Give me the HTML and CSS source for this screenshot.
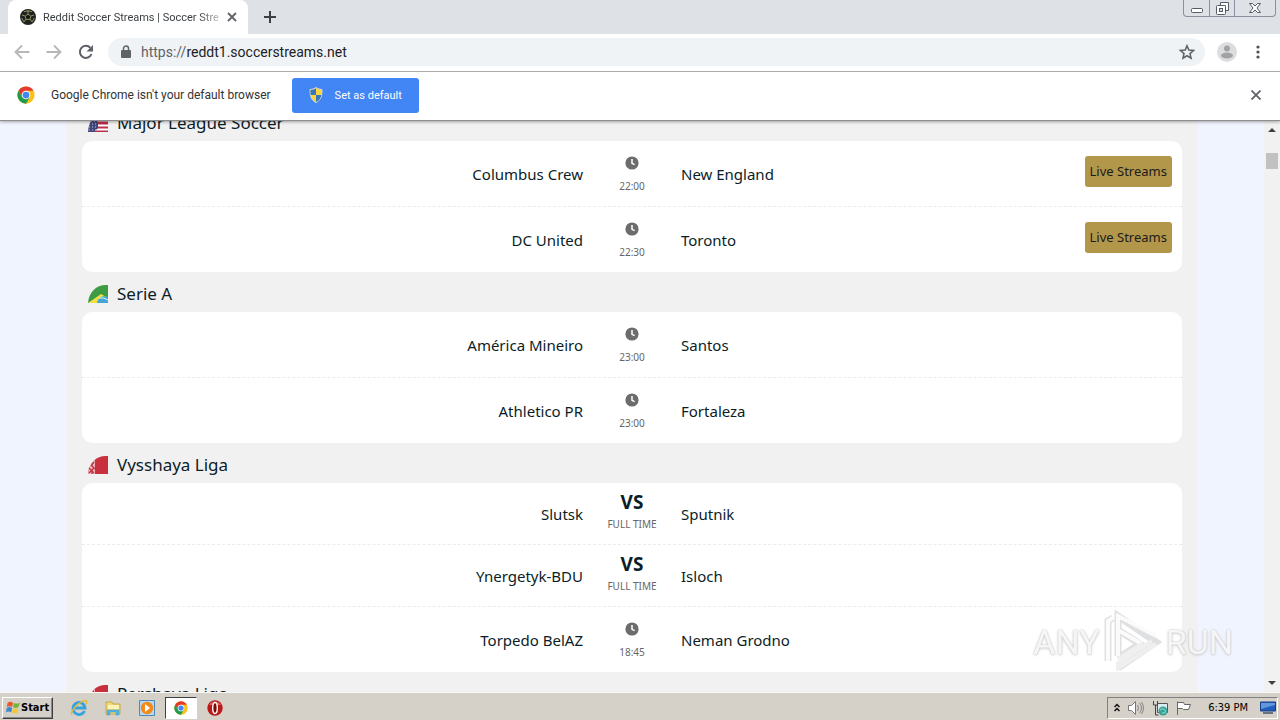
FILE: index.html
```html
<!DOCTYPE html>
<html lang="en">
<head>
<meta charset="utf-8">
<title>Reddit Soccer Streams</title>
<link rel="stylesheet" href="styles.css">
</head>
<body>
<svg class="defs" aria-hidden="true">
  <symbol id="clock" viewBox="0 0 14 14"><circle cx="7" cy="7" r="6.6" fill="#6c6c6c"/><path d="M7 3v4.3l2.6 1.4" fill="none" stroke="#fff" stroke-width="1.5"/></symbol>
  <symbol id="belarus" viewBox="0 0 20 18"><path d="M0 18C1 7 8 0 18 0h2v18z" fill="#c8303e"/><path d="M0 18C1 11 3 7 7 4v14z" fill="#e9b9bd"/><path d="M1 17l5-5M1 12l5 5M3 9l4 4M6 6l-3 4M4 14v4" stroke="#c8303e" stroke-width="1.3"/></symbol>
  <symbol id="chrome" viewBox="0 0 48 48"><circle cx="24" cy="24" r="23" fill="#fbc116"/><path d="M4.1 12.5A23 23 0 0 1 43.9 12.5H24L14 30z" fill="#e33b2e"/><path d="M4.1 12.5 14 30l10 5 10-5-10 17A23 23 0 0 1 4.1 12.5z" fill="#229a4c"/><circle cx="24" cy="24" r="11.5" fill="#fff"/><circle cx="24" cy="24" r="9" fill="#4285f4"/></symbol>
</svg>
<div class="screen">
  <header class="tabstrip">
    <div class="tab">
      <svg class="i16" viewBox="0 0 16 16"><circle cx="8" cy="8" r="8" fill="#20241e"/><path d="m8 5.2 2.8 2-1 3.2H6.2l-1-3.2z" fill="#121512" stroke="#8d9165"/><path d="M8 1v4M2 6l3 1M14 6l-3 1M4 13l2-3M12 13l-2-3M4 2.5 8 2l4 .5M1.5 9 4 13M14.5 9 12 13" stroke="#8d9165" fill="none"/></svg>
      <span class="tab-title">Reddit Soccer Streams | Soccer Stre</span>
      <button class="plain" aria-label="Close tab"><svg class="i10" viewBox="0 0 10 10"><path d="m1 1 8 8M9 1 1 9" stroke="#5f6368" stroke-width="1.8"/></svg></button>
    </div>
    <button class="plain newtab" aria-label="New tab"><svg class="i12" viewBox="0 0 12 12"><path d="M6 0v12M0 6h12" stroke="#3c4043" stroke-width="2"/></svg></button>
    <div class="winbtns">
      <button aria-label="Minimize"><svg width="12" height="12" viewBox="0 0 12 12"><rect x=".5" y="6.5" width="11" height="4" rx="1" fill="#fff" stroke="#555b66"/></svg></button>
      <button aria-label="Restore"><svg width="13" height="13" viewBox="0 0 13 13"><path d="M4.5.5h8v8h-3v-5h-5z" fill="#fff" stroke="#555b66"/><rect x=".5" y="3.5" width="9" height="9" rx="1" fill="#fff" stroke="#555b66"/><rect x="3.5" y="6.5" width="3" height="3" fill="#dee1e6" stroke="#555b66"/></svg></button>
      <button class="wide" aria-label="Close"><svg width="12" height="12" viewBox="0 0 12 12"><path d="M.5 1.5h3L6 4l2.5-2.5h3L8 6l3.5 4.5h-3L6 8l-2.5 2.5h-3L4 6z" fill="#fff" stroke="#555b66"/></svg></button>
    </div>
  </header>

  <div class="toolbar">
    <button class="plain" aria-label="Back"><svg class="i16" viewBox="0 0 16 16"><path d="M15.5 8H2M8 1.5 1.5 8 8 14.5" fill="none" stroke="#b5b7b9" stroke-width="1.8"/></svg></button>
    <button class="plain" aria-label="Forward"><svg class="i16" viewBox="0 0 16 16"><path d="M.5 8H14M8 1.5 14.5 8 8 14.5" fill="none" stroke="#b5b7b9" stroke-width="1.8"/></svg></button>
    <button class="plain" aria-label="Reload"><svg class="i16" viewBox="0 0 16 16"><path d="M13.5 10A6 6 0 1 1 12.3 3.8" fill="none" stroke="#5f6368" stroke-width="2"/><path d="M15 1v6.5H8.5z" fill="#5f6368"/></svg></button>
    <div class="omnibox">
      <svg width="10" height="14" viewBox="0 0 10 14"><rect y="5" width="10" height="8" rx="1" fill="#5f6368"/><path d="M2.500 6V3.500a2.500 2.500 0 0 1 5 0V6" fill="none" stroke="#5f6368" stroke-width="1.500"/></svg>
      <a class="url" href="#"><span class="scheme">https://</span>reddt1.soccerstreams.net</a>
      <button class="plain" aria-label="Bookmark"><svg class="i16" viewBox="0 0 16 16"><path d="m8 1.800 1.800 4.300 4.700.4-3.500 3.100 1 4.600L8 11.800l-4 2.400 1-4.600-3.500-3.100 4.700-.4z" fill="none" stroke="#5f6368" stroke-width="1.600"/></svg></button>
    </div>
    <button class="plain" aria-label="Profile"><svg width="20" height="20" viewBox="0 0 20 20"><circle cx="10" cy="10" r="10" fill="#dcdddf"/><circle cx="10" cy="6.500" r="3" fill="#a0a2a5"/><ellipse cx="10" cy="13.500" rx="6" ry="3" fill="#a0a2a5"/></svg></button>
    <button class="plain menu" aria-label="Menu"><svg width="4" height="14" viewBox="0 0 4 14"><g fill="#4d5156"><circle cx="2" cy="2" r="1.600"/><circle cx="2" cy="7" r="1.600"/><circle cx="2" cy="12" r="1.600"/></g></svg></button>
  </div>

  <div class="infobar">
    <svg class="i18"><use href="#chrome"/></svg>
    <span class="info-text">Google Chrome isn't your default browser</span>
    <button class="set-default"><svg width="14" height="16" viewBox="0 0 14 16"><path d="M7 .5C5 2 3 2.300 1 2.500 1 9 2 13 7 15.500 12 13 13 9 13 2.500 11 2.300 9 2 7 .5z" fill="#f8d43d" stroke="#d5dae2"/><path d="M7 1.500V8H1.700C1.400 6 1.500 4.500 1.500 3 4 2.800 5.500 2.400 7 1.500zM7 8h5.300c-.5 3.500-2 5.500-5.300 7z" fill="#3777bd"/></svg>Set as default</button>
    <button class="plain dismiss" aria-label="Dismiss"><svg class="i10" viewBox="0 0 10 10"><path d="m.5.500 9 9M9.500.500l-9 9" stroke="#5f6368" stroke-width="1.800"/></svg></button>
  </div>

  <div class="viewport">
    <main class="page">
      <div class="scrolled">
      <h2><svg class="flag" viewBox="0 0 20 18"><path d="M0 18C1 7 8 0 18 0h2v18z" fill="#b9304a"/><path d="M9 6.500h11M9 11.500h11M0 15.500h20" stroke="#fff" stroke-width="2"/><path d="M0 18C1 7 5 2 10 1v13l-4 4z" fill="#3f477f"/><path d="M1 10h9M1 13h9M3 7h7M1 16h7" stroke="#c4c6da" stroke-dasharray="1 2"/></svg>Major League Soccer</h2>
      <section class="card">
        <div class="match"><span class="home">Columbus Crew</span><div class="status timed"><svg><use href="#clock"/></svg><small>22:00</small></div><div class="away">New England<button class="live">Live Streams</button></div></div>
        <div class="match"><span class="home">DC United</span><div class="status timed"><svg><use href="#clock"/></svg><small>22:30</small></div><div class="away">Toronto<button class="live">Live Streams</button></div></div>
      </section>
      <h2><svg class="flag" viewBox="0 0 20 18"><path d="M0 18C1 7 8 0 18 0h2v18z" fill="#3c9b43"/><path d="m0 18 13-9 7 4v5z" fill="#f2df45"/><path d="M9 18c1-5 5-8 11-6v6z" fill="#42a6d4"/><path d="M11 13q5-1 9 2" fill="none" stroke="#e6f3f6"/></svg>Serie A</h2>
      <section class="card">
        <div class="match"><span class="home">América Mineiro</span><div class="status timed"><svg><use href="#clock"/></svg><small>23:00</small></div><div class="away">Santos</div></div>
        <div class="match"><span class="home">Athletico PR</span><div class="status timed"><svg><use href="#clock"/></svg><small>23:00</small></div><div class="away">Fortaleza</div></div>
      </section>
      <h2><svg class="flag"><use href="#belarus"/></svg>Vysshaya Liga</h2>
      <section class="card">
        <div class="match"><span class="home">Slutsk</span><div class="status"><b>VS</b><small>FULL TIME</small></div><div class="away">Sputnik</div></div>
        <div class="match"><span class="home">Ynergetyk-BDU</span><div class="status"><b>VS</b><small>FULL TIME</small></div><div class="away">Isloch</div></div>
        <div class="match"><span class="home">Torpedo BelAZ</span><div class="status timed"><svg><use href="#clock"/></svg><small>18:45</small></div><div class="away">Neman Grodno</div></div>
      </section>
      <h2><svg class="flag"><use href="#belarus"/></svg>Pershaya Liga</h2>
      </div>
    </main>
    <div class="scrollbar">
      <svg width="8" height="4" viewBox="0 0 8 4"><path d="M0 4 4 0l4 4z" fill="#404040"/></svg>
      <div class="thumb"></div>
      <svg width="8" height="4" viewBox="0 0 8 4"><path d="M0 0h8L4 4z" fill="#404040"/></svg>
    </div>
    <div class="watermark"><span>ANY</span><svg width="58" height="64" viewBox="0 0 58 64"><g fill="none" stroke="#dcdddf" stroke-width="7"><path d="M4 51V11l5-3M14 46V6l38 26-38 26"/><path d="M14 20l22 14-22 14"/></g><g fill="none" stroke="#fbfbfb" stroke-width="4"><path d="M4 51V11l5-3M14 46V6l38 20"/><path d="M14 20l24 14"/></g><g fill="none" stroke="#eeeeef" stroke-width="4"><path d="M52 34 14 58v-5l34-22M38 34 14 49"/></g></svg><span>RUN</span></div>
  </div>

  <footer class="taskbar">
    <button class="start"><svg width="16" height="16" viewBox="0 0 18 16"><path d="M3 2q3-2 6 0L8 7Q5 5 2 7z" fill="#e8592b"/><path d="M10 2q3 2 7 0l-2 5q-3 2-6 0z" fill="#74b53a"/><path d="M2 8q3-2 6 0l-1 5q-3-2-6 0z" fill="#3e87cf"/><path d="M9 8q3 2 6 0l-1 5q-3 2-6 0z" fill="#f7c82e"/></svg>Start</button>
    <nav class="apps">
      <button aria-label="Internet Explorer"><svg class="i18" viewBox="0 0 18 18"><path d="M14.500 12A6 6 0 1 1 15 9H5" fill="none" stroke="#35a3dd" stroke-width="2.800"/><path d="M2 16C-1 14 8 3 15 1.500q3 0 1 4" fill="none" stroke="#e5b93a" stroke-width="1.400"/></svg></button>
      <button aria-label="Explorer"><svg class="i18" viewBox="0 0 18 18"><path d="M2 3h6l1 2h7v10H2z" fill="#eed777" stroke="#c9aa46"/><path d="M4 6h11v4H4z" fill="#fbf2b8"/><path d="M3 16v-5h12v5h-3v-3H6v3z" fill="#55b4e0" stroke="#4298c4" stroke-width=".5"/></svg></button>
      <button aria-label="Media Player"><svg class="i18" viewBox="0 0 18 18"><path d="M1.500 1.500h15v15h-15z" fill="#b9d7ee" stroke="#4b89bd"/><circle cx="9" cy="9" r="6.200" fill="#f18a1b"/><path d="m7 5 5 4-5 4z" fill="#fff"/></svg></button>
      <button class="active" aria-label="Chrome"><svg class="i14"><use href="#chrome"/></svg></button>
      <button aria-label="Opera"><svg class="i18" viewBox="0 0 18 18"><circle cx="9" cy="9" r="7.700" fill="#bd1717"/><path d="M3 6a7 7 0 0 1 12 0z" fill="#db6158"/><ellipse cx="9" cy="9" rx="2.300" ry="5.500" fill="#7b0909" stroke="#fff" stroke-width="1.400"/></svg></button>
    </nav>
    <div class="tray">
      <svg width="6" height="9" viewBox="0 0 6 9"><path d="m.5 4 2.500-2.500L5.500 4M.5 8 3 5.500 5.500 8" fill="none" stroke="#111" stroke-width="1.500"/></svg>
      <svg width="16" height="16" viewBox="0 0 16 16"><path d="M.5 5.500h3l4-4v13l-4-4h-3z" fill="#fff" stroke="#777"/><path d="M9.500 5q2 3 0 6M11.500 3q4 5 0 10M13.500 2q4 6 0 12" fill="none" stroke="#858585"/></svg>
      <svg width="16" height="16" viewBox="0 0 16 16"><path d="M5.500 3.500h10v9h-10z" fill="#d9eef0" stroke="#555"/><path d="M1.500 1v4h4V1M3.500 5v10h3" fill="none" stroke="#444"/><circle cx="11" cy="11" r="4.500" fill="#36a49b"/><path d="M8 10q3-3 5 0t-3 3" fill="none" stroke="#9fd8ce"/></svg>
      <svg width="16" height="16" viewBox="0 0 16 16"><path d="M1.500 15V1.500M1.500 2.500h6l1 2h6l-2 5h-5l-1-1h-5" fill="#fff" stroke="#666"/></svg>
      <time>6:39 PM</time>
      <svg width="16" height="14" viewBox="0 0 16 14"><path d="M.5 1h15v9H.500z" fill="#225dbb" stroke="#173f85"/><path d="M1 2h14v2L1 8z" fill="#6297df"/><path d="M3 12h10" stroke="#68737f" stroke-width="2"/></svg>
    </div>
  </footer>
</div>
</body>
</html>
```
FILE: styles.css
```css
* { box-sizing: border-box; }
body { margin: 0; font-family: Roboto, "Open Sans", sans-serif; color: #0b1d27; }
button { font: inherit; color: inherit; margin: 0; padding: 0; border: 0; background: none; display: flex; align-items: center; justify-content: center; }
svg { display: block; flex: none; }
a { color: inherit; text-decoration: none; }
.defs { position: absolute; width: 0; height: 0; }
.i10 { width: 10px; height: 10px; }
.i12 { width: 12px; height: 12px; }
.i14 { width: 14px; height: 14px; }
.i16 { width: 16px; height: 16px; }
.i18 { width: 18px; height: 18px; }
.screen { height: 100vh; display: flex; flex-direction: column; overflow: hidden; }

.tabstrip { display: flex; height: 34px; background: #dee1e6; padding-left: 8px; flex: none; }
.tab { display: flex; align-items: center; width: 240px; background: #fff; border-radius: 8px 8px 0 0; padding: 0 11px 0 12px; gap: 7px; }
.tab-title { flex: 1; min-width: 0; overflow: hidden; white-space: nowrap; font-size: 11px; color: #3c4043; -webkit-mask-image: linear-gradient(to right, #000 88%, #0004); mask-image: linear-gradient(to right, #000 88%, #0004); }
.newtab { width: 44px; }
.winbtns { display: flex; margin-left: auto; margin-right: 4px; height: 17px; border: 1px solid #8b919c; border-top: 0; border-radius: 0 0 4px 4px; }
.winbtns button { width: 25px; }
.winbtns button + button { border-left: 1px solid #8b919c; }
.winbtns .wide { width: 41px; }

.toolbar { display: flex; align-items: center; height: 38px; flex: none; padding: 0 17px 2px 14px; gap: 16px; background: #fff; border-bottom: 1px solid #b6b6b8; }
.omnibox { flex: 1; display: flex; align-items: center; gap: 10px; height: 28px; margin: 0 -4px 0 -2px; padding: 0 10px 0 13px; border-radius: 14px; background: #f0f3f6; }
.url { flex: 1; font-size: 14px; color: #202124; }
.scheme { color: #5f6368; }
.menu { width: 10px; }

.infobar { display: flex; align-items: center; height: 49px; flex: none; padding: 0 19px 2px 17px; background: #fff; border-bottom: 1px solid #8e8e8e; box-shadow: 0 1px 3px #0005; position: relative; z-index: 1; }
.info-text { margin: 0 21px 0 16px; font-size: 12px; color: #333; }
.set-default { height: 35px; padding: 0 17px; gap: 12px; border-radius: 3px; background: #4285f4; color: #fff; font-size: 11px; }
.dismiss { margin-left: auto; }

.viewport { position: relative; flex: 1; min-height: 0; display: flex; background: #f0f4fe; overflow: hidden; }
.page { flex: 1; margin: 0 66px; padding: 0 16px; background: #f1f1f1; overflow: hidden; font-family: "Noto Sans", "Open Sans", sans-serif; }
.scrolled { margin-top: -20px; }
h2 { display: flex; align-items: center; height: 40px; margin: 0; padding: 3px 6px 0; gap: 9px; font-size: 17px; font-weight: 400; line-height: 24px; }
.flag { width: 20px; height: 18px; }
.card { background: #fff; border-radius: 10px; }
.match { display: grid; grid-template-columns: 1fr 98px 1fr; align-items: center; border-bottom: 1px dashed #ececec; font-size: 15px; line-height: 22px; }
.match:last-child { border-bottom: 0; }
.home { text-align: right; }
.away { display: flex; align-items: center; justify-content: space-between; padding-right: 10px; }
.status { display: grid; justify-items: center; gap: 2px; padding: 9px 0 10px; line-height: 20px; }
.status b { font-size: 19px; }
.status small { font-size: 10px; color: #666; line-height: 20px; }
.status svg { width: 14px; height: 14px; margin: 3px 0; }
.timed { gap: 3px; padding: 12px 0 10px; }
.live { height: 31px; margin: -5px 0 0; padding: 0 5px; border-radius: 3px; background: #b2964a; color: #1c1c1c; font-size: 13px; }

.scrollbar { width: 16px; flex: none; display: flex; flex-direction: column; align-items: center; padding: 7px 0; background: #f1f1f1; }
.thumb { width: 12px; height: 16px; margin: 21px 0 auto 0; background: #c1c1c1; }
.watermark { position: absolute; right: 47px; bottom: 18px; display: flex; align-items: center; gap: 4px; opacity: 0.9; font-size: 34px; color: #f6f6f7; text-shadow: 0 0 2px #bbb, 0 1px 3px #ccc; }

.taskbar { display: flex; align-items: center; height: 28px; flex: none; padding: 2px 2px 0; background: #d5d0c8; border-top: 1px solid #f8f8f6; }
.start { height: 22px; padding: 0 3px 0 2px; border: 1px solid; border-color: #fff #404040 #404040 #fff; box-shadow: inset -1px -1px #888; font: bold 11px "DejaVu Sans Condensed", "DejaVu Sans", sans-serif; color: #000; }
.apps { display: flex; margin-left: 10px; gap: 2px; }
.apps button { width: 32px; height: 22px; }
.apps .active { border: 1px solid; border-color: #404040 #fff #fff #404040; background: #fff; }
.tray { display: flex; align-items: center; margin-left: auto; gap: 8px; height: 22px; padding: 0 1px 0 6px; border: 1px solid; border-color: #808080 #fff #fff #808080; color: #000; font: 11px "DejaVu Sans Condensed", "DejaVu Sans", sans-serif; }
.tray time { margin: 0 4px 0 8px; }
```
